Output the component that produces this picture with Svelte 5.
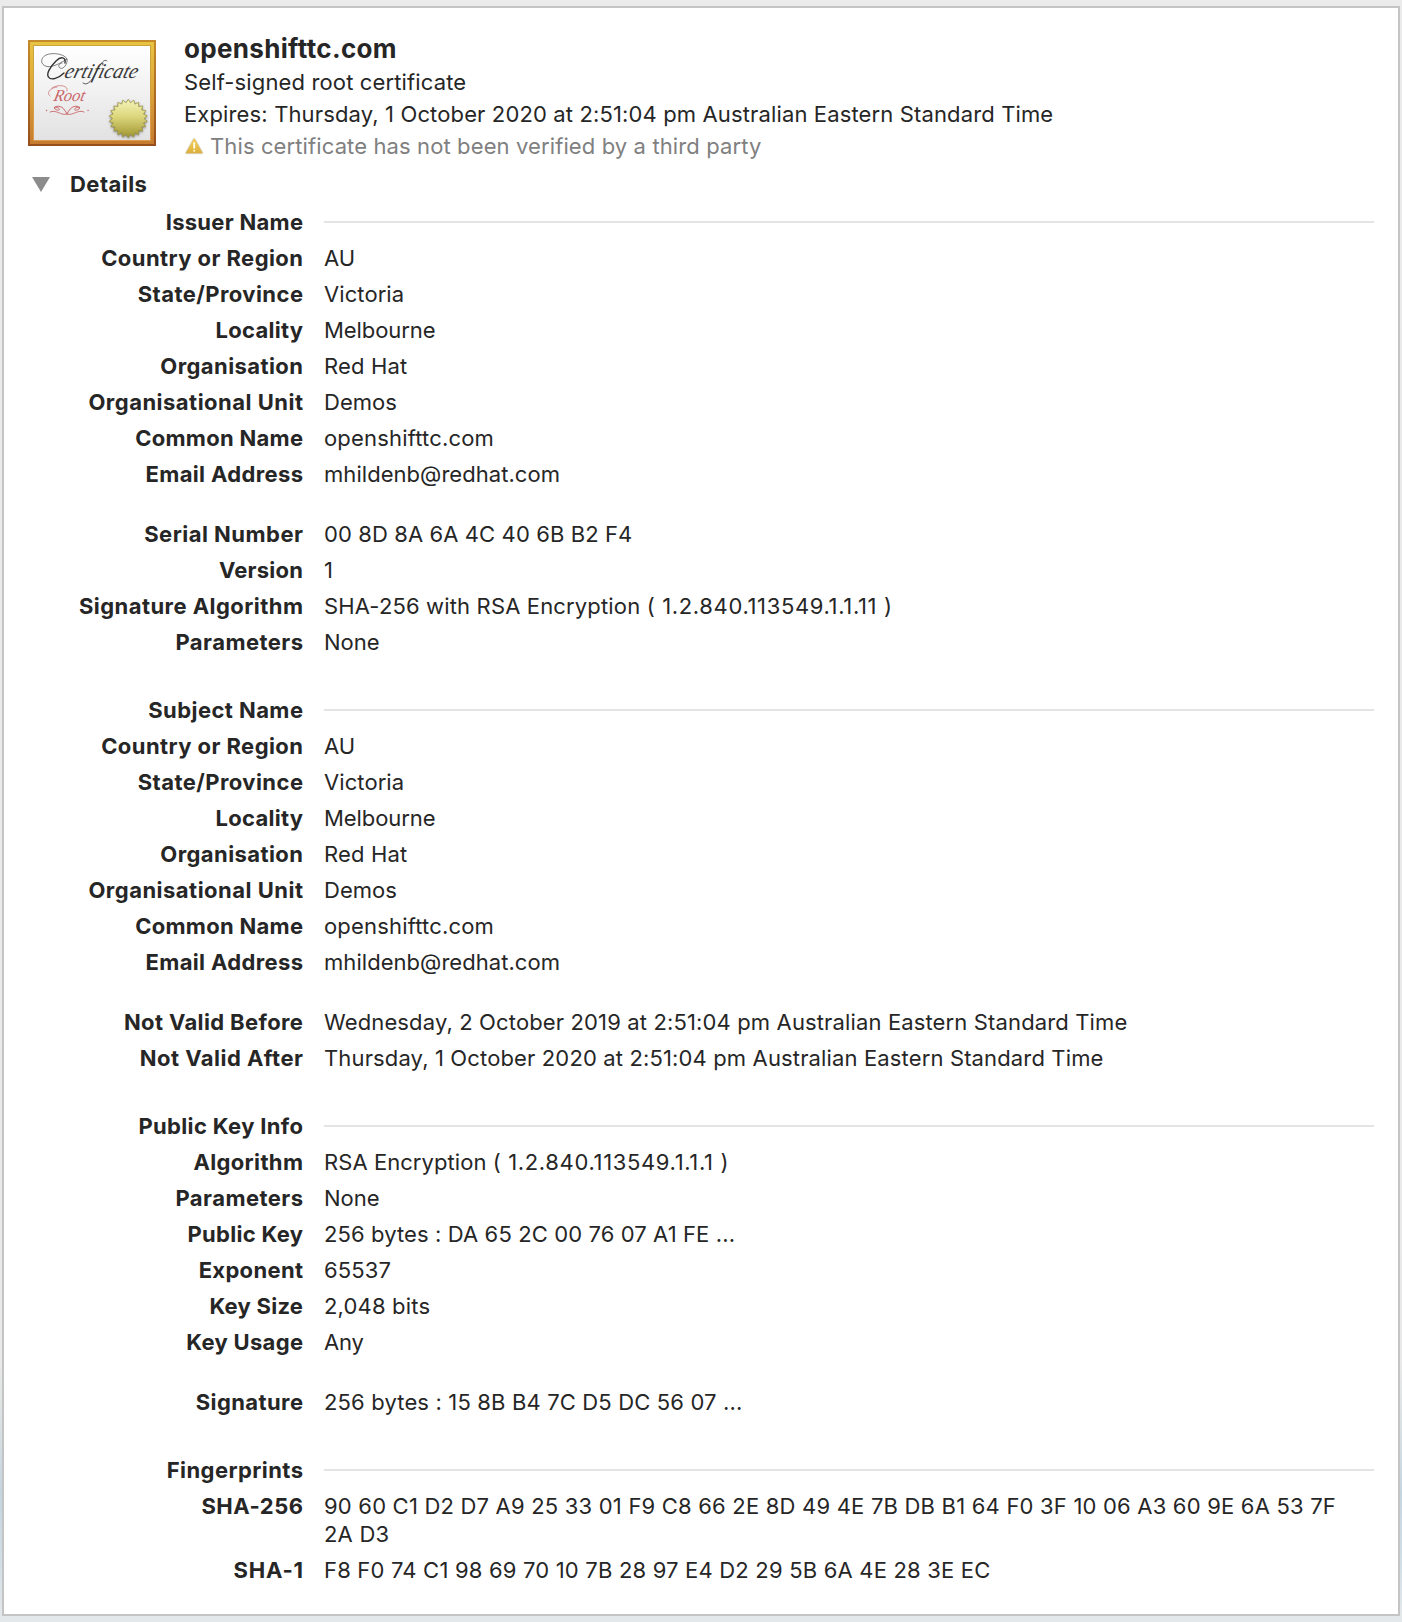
<script>
  // Each row is [label, value]; a null value draws a section rule, and a third item is an object identifier.
  const name = [
    ['Country or Region', 'AU'],
    ['State/Province', 'Victoria'],
    ['Locality', 'Melbourne'],
    ['Organisation', 'Red Hat'],
    ['Organisational Unit', 'Demos'],
    ['Common Name', 'openshifttc.com'],
    ['Email Address', 'mhildenb@redhat.com'],
  ];
  const groups = [
    { rows: [['Issuer Name', null], ...name] },
    {
      rows: [
        ['Serial Number', '00 8D 8A 6A 4C 40 6B B2 F4'],
        ['Version', '1'],
        ['Signature Algorithm', 'SHA-256 with RSA Encryption ', '( 1.2.840.113549.1.1.11 )'],
        ['Parameters', 'None'],
      ],
    },
    { section: true, rows: [['Subject Name', null], ...name] },
    {
      rows: [
        ['Not Valid Before', 'Wednesday, 2 October 2019 at 2:51:04 pm Australian Eastern Standard Time'],
        ['Not Valid After', 'Thursday, 1 October 2020 at 2:51:04 pm Australian Eastern Standard Time'],
      ],
    },
    {
      section: true,
      rows: [
        ['Public Key Info', null],
        ['Algorithm', 'RSA Encryption ', '( 1.2.840.113549.1.1.1 )'],
        ['Parameters', 'None'],
        ['Public Key', '256 bytes : DA 65 2C 00 76 07 A1 FE ...'],
        ['Exponent', '65537'],
        ['Key Size', '2,048 bits'],
        ['Key Usage', 'Any'],
      ],
    },
    { rows: [['Signature', '256 bytes : 15 8B B4 7C D5 DC 56 07 ...']] },
    {
      section: true,
      rows: [
        ['Fingerprints', null],
        ['SHA-256', '90 60 C1 D2 D7 A9 25 33 01 F9 C8 66 2E 8D 49 4E 7B DB B1 64 F0 3F 10 06 A3 60 9E 6A 53 7F 2A D3'],
        ['SHA-1', 'F8 F0 74 C1 98 69 70 10 7B 28 97 E4 D2 29 5B 6A 4E 28 3E EC'],
      ],
    },
  ];

  // Letter spacing, in pixels: [label, value]. Labels not listed use the default pair.
  const defaultTracking = [0.4, 0.13];
  const tracking = {
    'Country or Region': [0.43, 0],
    'State/Province': [0.44, 0.08],
    Locality: [0.26, -0.08],
    Organisation: [0.43, 0.15],
    'Organisational Unit': [0.49, 0],
    'Common Name': [0.28, 0.17],
    'Email Address': [0.36, 0.05],
    'Issuer Name': [0.28, 0],
    'Subject Name': [0.43, 0],
    'Serial Number': [0.48, 0.1],
    Version: [0.25, 0],
    'Signature Algorithm': [0.45, 0.15],
    Parameters: [0.44, 0],
    'Not Valid Before': [0.38, 0.137],
    'Not Valid After': [0.48, 0.14],
    'Public Key Info': [0.35, 0],
    Algorithm: [0.35, 0.06],
    'Public Key': [0.31, 0.11],
    Exponent: [0.33, 0.15],
    'Key Size': [0.26, 0.17],
    'Key Usage': [0.29, -0.2],
    Signature: [0.4, 0.15],
    Fingerprints: [0.43, 0],
    'SHA-256': [0.5, 0.2],
    'SHA-1': [0.8, 0.19],
  };
  const track = (label, i) => `${(tracking[label] ?? defaultTracking)[i]}px`;

  // Outline of the round seal: alternating outer and inner radii.
  const teeth = 22;
  const seal = Array.from({ length: teeth * 2 }, (_, i) => {
    const a = (i * Math.PI) / teeth - Math.PI / 2;
    const r = i % 2 ? 15.8 : 19.2;
    return `${(100.3 + r * Math.cos(a)).toFixed(2)},${(78.5 + r * Math.sin(a)).toFixed(2)}`;
  }).join(' ');
</script>

<main>
  <section class="panel">
    <header>
      <svg class="cert" width="128" height="106" viewBox="0 0 128 106" aria-hidden="true">
        <defs>
          <linearGradient id="edge" x2="0" y2="1"><stop stop-color="#c58a2b" /><stop offset="1" stop-color="#964e1d" /></linearGradient>
          <linearGradient id="frame" x2="0" y2="1"><stop stop-color="#e8c441" /><stop offset=".5" stop-color="#dba338" /><stop offset="1" stop-color="#c67a2f" /></linearGradient>
          <linearGradient id="lip" x2="0" y2="1"><stop stop-color="#c9a53a" /><stop offset="1" stop-color="#dc9a50" /></linearGradient>
          <linearGradient id="paper" x2="0" y2="1"><stop stop-color="#fff" /><stop offset="1" stop-color="#e2e2e3" /></linearGradient>
          <linearGradient id="gold" x2="0" y2="1"><stop stop-color="#f5f4bd" /><stop offset=".45" stop-color="#dcd77c" /><stop offset="1" stop-color="#9f9430" /></linearGradient>
        </defs>
        <rect width="128" height="106" fill="url(#edge)" />
        <rect x="2" y="2" width="124" height="102" fill="url(#frame)" />
        <rect x="5" y="5" width="118" height="96" fill="url(#lip)" />
        <rect x="6" y="6" width="116" height="94" fill="url(#paper)" />
        <g transform="translate(35.500 37.500) skewX(-16)">
          <text class="script" textLength="73" lengthAdjust="spacingAndGlyphs">ertificate</text>
        </g>
        <g fill="none" stroke="#333" stroke-linecap="round">
          <path d="M37 23C38 17 33 16 28 21C22 27 18 34 20.500 37C23 41 31 38 36 33" stroke-width="1.400" />
          <path d="M39 19C37 14 25 12 18 15C12 18 12 25 19 26.500C26 27.500 34 22 39 19C40 24 35 30 32 28C29 26 32 23 34 23" stroke-width=".6" />
          <path d="M79 21C76 17 70 28 66 36C63 42 58 46 55 43" stroke-width=".8" />
        </g>
        <g transform="translate(25 60.500) skewX(-12)">
          <text class="script root" textLength="31" lengthAdjust="spacingAndGlyphs">Root</text>
        </g>
        <g fill="none" stroke="#c9676a" stroke-linecap="round">
          <path d="M29 47C22 48 18 53 22 56M24 48C30 44 41 45 39 51" stroke-width=".7" />
          <path d="M39 74C35 65 29 65 26 68C31 73 35 68 27 67M39 74C43 65 49 65 52 68C47 73 43 68 51 67" stroke-width="1" />
          <path d="M22 72C28 69 33 76 39 74C45 76 50 69 56 72" stroke-width=".9" />
          <path d="M18.500 70.500h.1M60 70.500h.1" stroke-width="1.300" />
        </g>
        <polygon class="seal" points={seal} fill="url(#gold)" stroke="#968c35" stroke-width=".7" />
      </svg>
      <div class="summary">
        <h1>openshifttc.com</h1>
        <p>Self-signed root certificate</p>
        <p>Expires: Thursday, 1 October 2020 at 2:51:04 pm Australian Eastern Standard Time</p>
        <p class="warning">
          <svg width="20" height="18" viewBox="-1 -.5 20 18" aria-hidden="true">
            <defs>
              <linearGradient id="warn" x2="0" y2="1"><stop stop-color="#f3d050" /><stop offset="1" stop-color="#dcae3d" /></linearGradient>
            </defs>
            <path d="M8.200 1.600Q9.200 .2 10.200 1.600L17.600 14.800Q18.100 16.200 16.900 16.200H1.500Q.3 16.200 .8 14.800Z" fill="url(#warn)" stroke="#d5d0c6" stroke-width=".8" />
            <path d="M9.200 5.500v4.700M9.200 13.200v.1" stroke="#fff8e4" stroke-width="2" stroke-linecap="round" />
          </svg>
          <span>This certificate has not been verified by a third party</span>
        </p>
      </div>
    </header>

    <div class="toggle">
      <svg width="18" height="15" viewBox="0 0 18 15" aria-hidden="true"><path d="M0 0H18L9 15Z" fill="#8c8c8c" /></svg>
      <h2>Details</h2>
    </div>

    <div class="details">
      {#each groups as group}
        <dl class:section={group.section}>
          {#each group.rows as [label, value, oid]}
            <dt style:--track={track(label, 0)}>{label}</dt>
            {#if value === null}
              <dd class="rule"></dd>
            {:else}
              <dd style:--track={track(label, 1)}>{value}{#if oid}<span class="oid">{oid}</span>{/if}</dd>
            {/if}
          {/each}
        </dl>
      {/each}
    </div>
  </section>
</main>

<style>
  :global(body) {
    margin: 0;
  }

  main {
    box-sizing: border-box;
    height: 1622px;
    padding: 6px 2px;
    background: linear-gradient(#ebebeb 0, #e8e9e8 84%, #dde3e4 87%, #c5d5e0 92%, #cfdde5 96%, #e3e8eb 99.500%);
    color: #262626;
    font: 22px/28px Inter, 'Liberation Sans', sans-serif;
  }

  .panel {
    box-sizing: border-box;
    height: 1610px;
    padding: 24px;
    border: 2px solid #c4c4c4;
    background: #fff;
  }

  header {
    display: flex;
    gap: 28px;
  }

  .cert {
    flex: none;
    margin-top: 8px;
  }

  .script {
    font: italic 21px 'Liberation Serif', serif;
    fill: #3a3a3a;
  }

  .root {
    font-size: 17px;
    fill: #c9676a;
  }

  .seal {
    filter: drop-shadow(0 1px 1px #0006);
  }

  h1,
  h2,
  p,
  dl,
  dd {
    margin: 0;
  }

  h1 {
    font-size: 26px;
    line-height: 34px;
    font-weight: 700;
    letter-spacing: 0.33px;
  }

  h2 {
    font-size: 22px;
    line-height: 28px;
    font-weight: 700;
    letter-spacing: 0.45px;
  }

  p {
    line-height: 32px;
    letter-spacing: 0.135px;
    white-space: nowrap;
  }

  .warning {
    display: flex;
    align-items: center;
    gap: 6px;
    color: #808080;
    letter-spacing: 0.115px;
  }

  .toggle {
    display: flex;
    align-items: center;
    gap: 20px;
    margin: 8px 0 10px 4px;
  }

  .details {
    display: grid;
    gap: 32px;
  }

  dl {
    display: grid;
    grid-template-columns: 275px 1030px;
    gap: 8px 21px;
  }

  .section {
    margin-top: 8px;
  }

  dt {
    margin-right: calc(-1 * var(--track));
    font-weight: 700;
    letter-spacing: var(--track);
    text-align: right;
    white-space: nowrap;
  }

  dd {
    letter-spacing: var(--track);
  }

  .oid {
    letter-spacing: 0.65px;
  }

  .rule {
    align-self: center;
    width: 1050px;
    height: 2px;
    background: #e4e4e4;
  }
</style>
